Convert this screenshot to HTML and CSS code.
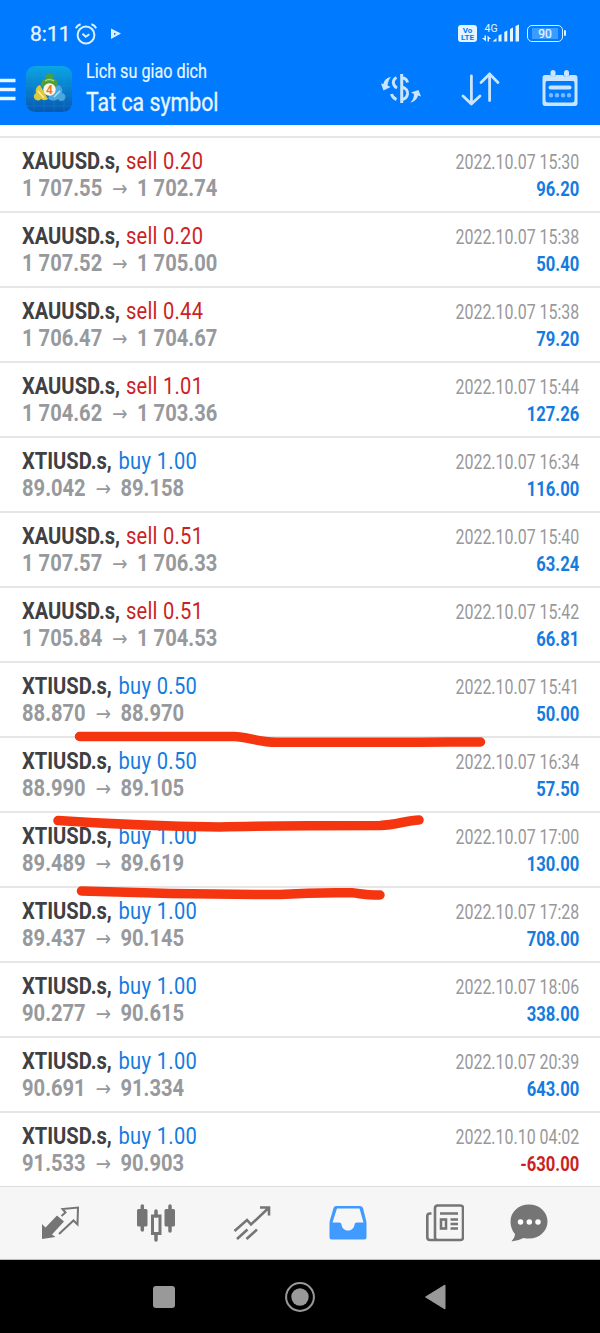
FILE: index.html
```
<!DOCTYPE html>
<html lang="vi">
<head>
<meta charset="utf-8">
<title>Lich su giao dich</title>
<link rel="stylesheet" href="styles.css">
</head>
<body>
<div class="screen">
<header class="header">
  <div class="status">
    <span class="clock">8:11</span>
    <svg class="alarm" width="24" height="24" viewBox="0 0 24 24"><circle cx="12" cy="13" r="8.4"/><path d="M8.5 11.8l3.3 3 3.5-2.6M1.8 6.2C3 4 4.5 2.8 6.6 2.2M22.200 6.200C21 4 19.500 2.800 17.400 2.200"/></svg>
    <svg class="play" width="12" height="12" viewBox="0 0 12 12"><path d="M1 .5L11 5.500 1 11ZM4 4.800V7L6.300 5.800Z" fill-rule="evenodd"/></svg>
    <span class="volte"><b>Vo</b><b>LTE</b></span>
    <svg class="signal" width="38" height="22" viewBox="0 0 38 22"><text x="2.500" y="8.500">4G</text><path d="M10.500 18.500l4-3.500v3.500zM16.500 18.500v-6l3-1.500V18.500zM22.300 18.500V9l3-1.500V18.500zM28 18.500V6L31 4.500v14zM33.500 18.500V3L37 1.500V18.500zM2.500 12.500h1.500v6L0 15h2.500zM5.500 18.500v-6L9 16H7v2.500z"/></svg>
    <div class="battery"><span>90</span></div>
  </div>
  <div class="bar">
    <svg class="menu" width="16" height="24" viewBox="0 0 16 24"><path d="M0 2.500H15.500M0 11.500H15.500M0 20.500H15.500"/></svg>
    <svg class="logo" width="46" height="46" viewBox="0 0 46 46">
      <defs><linearGradient id="bg" x2="0" y2="1"><stop stop-color="#0ba5e4"/><stop offset="1" stop-color="#0758b1"/></linearGradient></defs>
      <rect width="46" height="46" rx="9" fill="url(#bg)"/>
      <path d="M8 0V46M18 0V46M28 0V46M38 0V46M0 10H46M0 20H46M0 30H46M0 40H46" stroke="#2b9ad8" stroke-width=".5" opacity=".5"/>
      <path d="M15 20C15 14 17 13 20 13A4 4 0 1 1 27 13C31 13 32 16 32 20L24 24Z" fill="#4d9f3c"/>
      <path d="M19 15Q23 12 28 15" stroke="#a4d867" stroke-width="1.500" fill="none"/>
      <path d="M14 19L22 33C19 35 17 34 15 33A4 4 0 1 1 10 27C9 23 11 20 14 19Z" fill="#dcc83f"/>
      <path d="M12 25L18 32" stroke="#fff08a" stroke-width="1.500"/>
      <path d="M33 19C36 21 37 24 36 27A4 4 0 1 1 32 33C27 36 23 34 22 32L28 22Z" fill="#4ba8de"/>
      <path d="M34 25L28 31" stroke="#a7e1ff" stroke-width="1.500"/>
      <circle cx="23.500" cy="23.500" r="6.200" fill="#fff6ea"/>
      <text x="23.500" y="27.500" text-anchor="middle" class="four">4</text>
    </svg>
    <div class="titles"><span class="t1">Lich su giao dich</span><span class="t2">Tat ca symbol</span></div>
    <svg class="act currency" width="42" height="34" viewBox="0 0 42 34"><path d="M21.700 3V32M22 7C25 7 27 9 27.500 11.500M22 16C26 17.500 28 19 27.500 23C27 26 25 28 22 28.500M16.500 6.500C13.500 8 12.500 11 14 14Q15 16 17 17M11.500 23Q12.500 27 16.500 28.500" fill="none" stroke-width="3"/><path d="M11 6C7 6.500 4 9 3.500 13L1 12.500 3.500 19.500 10.500 16 7.500 14.500C8 11 9 8 11 6ZM30.500 31.500C34 31 37 28.500 38 24.500L41 25.500 38.500 19 31 21.500 34 23C34 26 33 29 30.500 31.500Z"/></svg>
    <svg class="act sort" width="40" height="34" viewBox="0 0 40 34"><path d="M11.400 4V32M3 24L11.400 32 20 24M29.600 28.500V2M21 10.500L29.600 2 38 10.500"/></svg>
    <svg class="act calendar" width="36" height="38" viewBox="0 0 36 38"><path d="M3 6H8Q11 10 14 6H21Q24 10 28 6H33Q35.500 6 35.500 9V34Q35.500 37 33 37H3Q.5 37 .5 34V9Q.5 6 3 6ZM5 12Q3.500 12 3.500 14V31Q3.500 33.500 6 33.500H30Q32.500 33.500 32.500 31V14Q32.500 12 31 12Z" fill-rule="evenodd"/><rect x="8.500" y="1" width="5" height="7" rx="2.500"/><rect x="22" y="1" width="5" height="7" rx="2.500"/><rect x="6.500" y="16.500" width="23" height="4" rx="2"/><path d="M9 26.300h.01M15 26.300h.01M21 26.300h.01M27 26.300h.01" stroke-width="4.500" stroke-linecap="round" opacity=".6"/></svg>
  </div>
</header>
<main class="list">
  <div class="row"><div class="left"><div class="name"><b>XAUUSD.s,</b> <i class="sell">sell 0.20</i></div><div class="price">1 707.55 <em>→</em> 1 702.74</div></div><div class="right"><div class="date">2022.10.07 15:30</div><div class="profit">96.20</div></div></div>
  <div class="row"><div class="left"><div class="name"><b>XAUUSD.s,</b> <i class="sell">sell 0.20</i></div><div class="price">1 707.52 <em>→</em> 1 705.00</div></div><div class="right"><div class="date">2022.10.07 15:38</div><div class="profit">50.40</div></div></div>
  <div class="row"><div class="left"><div class="name"><b>XAUUSD.s,</b> <i class="sell">sell 0.44</i></div><div class="price">1 706.47 <em>→</em> 1 704.67</div></div><div class="right"><div class="date">2022.10.07 15:38</div><div class="profit">79.20</div></div></div>
  <div class="row"><div class="left"><div class="name"><b>XAUUSD.s,</b> <i class="sell">sell 1.01</i></div><div class="price">1 704.62 <em>→</em> 1 703.36</div></div><div class="right"><div class="date">2022.10.07 15:44</div><div class="profit">127.26</div></div></div>
  <div class="row"><div class="left"><div class="name"><b>XTIUSD.s,</b> <i class="buy">buy 1.00</i></div><div class="price">89.042 <em>→</em> 89.158</div></div><div class="right"><div class="date">2022.10.07 16:34</div><div class="profit">116.00</div></div></div>
  <div class="row"><div class="left"><div class="name"><b>XAUUSD.s,</b> <i class="sell">sell 0.51</i></div><div class="price">1 707.57 <em>→</em> 1 706.33</div></div><div class="right"><div class="date">2022.10.07 15:40</div><div class="profit">63.24</div></div></div>
  <div class="row"><div class="left"><div class="name"><b>XAUUSD.s,</b> <i class="sell">sell 0.51</i></div><div class="price">1 705.84 <em>→</em> 1 704.53</div></div><div class="right"><div class="date">2022.10.07 15:42</div><div class="profit">66.81</div></div></div>
  <div class="row"><div class="left"><div class="name"><b>XTIUSD.s,</b> <i class="buy">buy 0.50</i></div><div class="price">88.870 <em>→</em> 88.970</div></div><div class="right"><div class="date">2022.10.07 15:41</div><div class="profit">50.00</div></div></div>
  <div class="row"><div class="left"><div class="name"><b>XTIUSD.s,</b> <i class="buy">buy 0.50</i></div><div class="price">88.990 <em>→</em> 89.105</div></div><div class="right"><div class="date">2022.10.07 16:34</div><div class="profit">57.50</div></div></div>
  <div class="row"><div class="left"><div class="name"><b>XTIUSD.s,</b> <i class="buy">buy 1.00</i></div><div class="price">89.489 <em>→</em> 89.619</div></div><div class="right"><div class="date">2022.10.07 17:00</div><div class="profit">130.00</div></div></div>
  <div class="row"><div class="left"><div class="name"><b>XTIUSD.s,</b> <i class="buy">buy 1.00</i></div><div class="price">89.437 <em>→</em> 90.145</div></div><div class="right"><div class="date">2022.10.07 17:28</div><div class="profit">708.00</div></div></div>
  <div class="row"><div class="left"><div class="name"><b>XTIUSD.s,</b> <i class="buy">buy 1.00</i></div><div class="price">90.277 <em>→</em> 90.615</div></div><div class="right"><div class="date">2022.10.07 18:06</div><div class="profit">338.00</div></div></div>
  <div class="row"><div class="left"><div class="name"><b>XTIUSD.s,</b> <i class="buy">buy 1.00</i></div><div class="price">90.691 <em>→</em> 91.334</div></div><div class="right"><div class="date">2022.10.07 20:39</div><div class="profit">643.00</div></div></div>
  <div class="row"><div class="left"><div class="name"><b>XTIUSD.s,</b> <i class="buy">buy 1.00</i></div><div class="price">91.533 <em>→</em> 90.903</div></div><div class="right"><div class="date">2022.10.10 04:02</div><div class="profit loss">-630.00</div></div></div>
</main>
<nav class="tabs">
  <svg width="40" height="40" viewBox="0 0 40 40"><path d="M2 20L5.500 23.500 17 11.500 24 17.500 12 30.500 15.500 33 2 35Z"/><path d="M21.500 12L25.500 8.500 22.500 5 38 3.500 37.500 20.500 33.500 16.500 19 30" fill="none" stroke="#757575" stroke-width="2"/></svg>
  <svg width="40" height="40" viewBox="0 0 40 40"><rect x="1" y="5" width="10.500" height="17.500" rx="1.500"/><rect x="28.500" y="5" width="10.500" height="17.500" rx="1.500"/><path d="M6.300 2V26M34 2V27M20 7V12M20 30V36" fill="none" stroke="#757575" stroke-width="3.500" stroke-linecap="round"/><rect x="16.500" y="12" width="7.500" height="17.500" fill="none" stroke="#757575" stroke-width="3"/></svg>
  <svg width="40" height="40" viewBox="0 0 40 40"><path d="M2.500 27L15 16 19 20.500 36 4.500M28 3.500H37V11.500M5 35L15.500 25.500M14.500 35L25 25.500" fill="none" stroke="#757575" stroke-width="2.600"/></svg>
  <svg class="on" width="40" height="40" viewBox="0 0 40 40"><path d="M8 2H32Q34 2 35 4L38 16Q38.500 18 38.500 20V33Q38.500 35.500 36 35.500H4Q1.500 35.500 1.500 33V20Q1.500 18 2 16L5.500 4Q6.300 2 8 2ZM9 4.500L4.500 18.500H11Q13.500 18.500 13.500 20.500C14.500 28.500 25.500 28.500 26.500 20.500Q26.500 18.500 29 18.500H35.500L31.500 4.500Z" fill-rule="evenodd"/></svg>
  <svg width="40" height="40" viewBox="0 0 40 40"><g fill="none" stroke="#757575" stroke-width="2.600"><rect x="11" y="1.500" width="28" height="34.500" rx="2.500"/><path d="M7.500 9.500H6Q3.300 9.500 3.300 12V33Q3.300 36 6 36H13M16 9.500H34M26.500 15.500H34M26.500 20H34M26.500 24.500H34"/><rect x="17" y="15.500" width="5" height="9"/></g></svg>
  <svg class="chat" width="40" height="40" viewBox="0 0 40 40"><path d="M20 .5C30.500 .5 38.500 8 38.500 17.500S30.500 34.500 20 34.500Q17 34.500 14.500 34 9 37 2.500 37.500 6 33 6 30C3 27 1.500 22 1.500 17.500 1.500 8 9.500 .5 20 .5Z"/><path d="M11.500 18h.01M20.300 18h.01M29 18h.01" stroke="#fff" stroke-width="5.500" stroke-linecap="round"/></svg>
</nav>
<footer class="system">
  <svg width="30" height="30" viewBox="0 0 30 30"><rect x="4" y="4" width="22" height="22" rx="3"/></svg>
  <svg width="30" height="30" viewBox="0 0 30 30"><circle cx="15" cy="15" r="13.900" fill="none" stroke="#999" stroke-width="2"/><circle cx="15" cy="15" r="8.700"/></svg>
  <svg width="30" height="30" viewBox="0 0 30 30"><path d="M4.500 15L24 3V27Z" stroke="#999" stroke-linejoin="round"/></svg>
</footer>
<svg class="marks" width="600" height="1333" viewBox="0 0 600 1333"><path d="M79.500 736.500H234C248 737 258 742 276 742.300H408C424 741.800 452 742 480.500 742"/><path d="M58 820.500C110 824 180 826.500 220 827C265 825.500 330 825.500 380 825.500C396 825 406 820.500 419 820"/><path d="M81.500 891C140 893 220 894.500 280 894.500C310 892.500 335 892.500 352 892.800C362 893.500 361 895 380 895"/></svg>
</div>
</body>
</html>
```
FILE: styles.css
```
* { box-sizing: border-box; }
body { margin: 0; background: #fff; font-family: Roboto, "Liberation Sans", sans-serif; }
.screen { position: relative; width: 600px; height: 1333px; overflow: hidden; display: flex; flex-direction: column; }
svg { display: block; flex: none; }
.header { height: 125px; background: #007aff; flex: none; color: #e8f6ff; }
.status { display: flex; align-items: center; height: 45px; padding: 22px 37px 0 30px; }
.clock { font-size: 21px; line-height: 24px; width: 44px; padding-top: 1px; -webkit-text-stroke: .3px #e8f6ff; }
.alarm { fill: none; stroke: #d8f0ff; stroke-width: 2; }
.play { margin-left: 12px; fill: #d8f0ff; }
.volte { margin-left: auto; width: 19px; height: 17px; border-radius: 3px; background: #e4f5ff; color: #007aff; display: flex; flex-direction: column; align-items: center; font-size: 8px; line-height: 7px; padding-top: 2px; }
.signal { margin-left: 5px; fill: #e4f5ff; font-size: 10.500px; overflow: visible; }
.battery { position: relative; margin-left: 7px; width: 36px; height: 17px; border: 1.500px solid #d8f0ff; border-radius: 5px; padding: 2px 4px; }
.battery span { display: block; background: #3a9cff; font-size: 12px; line-height: 12px; height: 11px; text-align: center; -webkit-text-stroke: .2px #e8f6ff; }
.battery::after { content: ""; position: absolute; right: -4px; top: 4px; width: 2px; height: 6px; background: #d8f0ff; border-radius: 1px; }
.bar { display: flex; align-items: center; height: 80px; }
.menu { stroke: #e8f6ff; stroke-width: 3.500; margin-top: 10px; }
.logo { margin-left: 10px; margin-top: 7px; }
.four { font-size: 12px; font-weight: bold; fill: #ed7d26; }
.titles { width: 150px; margin-left: 14px; padding-top: 7px; display: flex; flex-direction: column; }
.titles span { transform-origin: 0 0; white-space: nowrap; }
.t1 { font-size: 20px; line-height: 26px; transform: scaleX(.81); -webkit-text-stroke: .2px #e8f6ff; }
.t2 { font-size: 26px; line-height: 36px; transform: scaleX(.82); -webkit-text-stroke: .3px #e8f6ff; }
.act { fill: #c9e5ff; stroke: #c9e5ff; stroke-width: 0; margin-top: 6px; }
.currency { margin-left: 144px; }
.sort { margin-left: 38px; margin-top: 8px; fill: none; stroke-width: 2.800; stroke-linecap: round; stroke-linejoin: round; }
.calendar { margin-left: 42px; }
.list { padding-top: 11px; height: 1061px; flex: none; }
.row { height: 75px; border-top: 2px solid #e6e6e6; padding: 10px 21px 0 22px; display: flex; justify-content: space-between; white-space: nowrap; }
.name { font-size: 24px; line-height: 27px; transform: scaleX(.838); transform-origin: 0 0; color: #404043; }
.name i { font-style: normal; margin-left: 1px; letter-spacing: .3px; }
.name .buy { margin-left: 2px; letter-spacing: .4px; }
.sell { color: #cc1f24; }
.buy { color: #147be0; }
.price { font-size: 24px; line-height: 27px; font-weight: 700; color: #97999c; transform: scaleX(.84); transform-origin: 0 0; }
.price em { display: inline-block; margin: 0 5px 0 6px; font-style: normal; font-family: "Noto Sans", "DejaVu Sans", sans-serif; font-weight: 400; font-size: 22px; line-height: 20px; }
.right { text-align: right; padding-top: 1px; }
.date { font-size: 20px; line-height: 27px; color: #98989a; transform: scaleX(.797); transform-origin: 100% 0; }
.profit { font-size: 20px; line-height: 26px; font-weight: 700; color: #147be0; transform: scaleX(.83); transform-origin: 100% 0; }
.loss { color: #cc1f24; }
.tabs { height: 74px; flex: none; background: #f6f6f6; border-top: 1px solid #ddd; border-bottom: 1px solid #bbb; display: flex; gap: 56px; padding: 17px 0 0 40px; fill: #757575; }
.tabs .on { fill: #419bff; }
.tabs .chat { margin-left: -11px; }
.system { flex: 1; background: #000; fill: #999; display: flex; gap: 106px; justify-content: center; padding-top: 22px; }
.marks { position: absolute; left: 0; top: 0; fill: none; stroke: #f5350f; stroke-width: 9.500; stroke-linecap: round; stroke-linejoin: round; pointer-events: none; }
```
